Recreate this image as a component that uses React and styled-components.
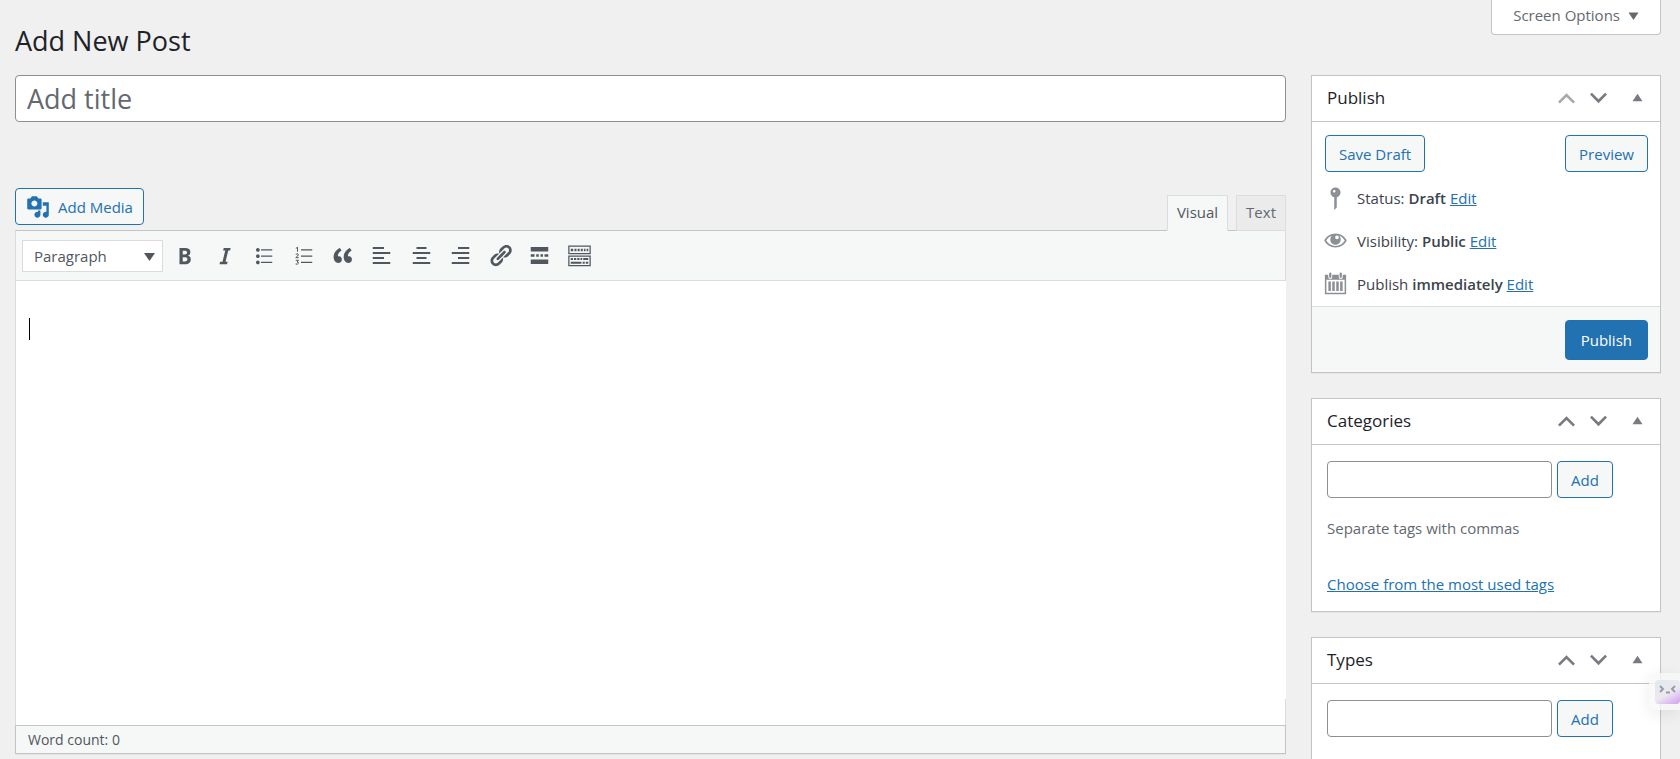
import React, { useState } from 'react';
import styled, { createGlobalStyle } from 'styled-components';


const GlobalStyle = createGlobalStyle`
    * {
        box-sizing: border-box;
    }

    body {
        margin: 0;
        background-color: #f0f0f0;
        color: #3c434a;
        font-family: "Open Sans", "Noto Sans", sans-serif;
        font-size: 15px;
        line-height: 22px;
    }

    button, input, select {
        font: inherit;
    }
`;

const Page = styled.div`
    height: 100vh;
    overflow: hidden;
    padding: 0 19px 0 15px;
`;

const TopBar = styled.header`
    display: flex;
    justify-content: space-between;
    align-items: flex-start;
    height: 75px;
`;

const PageHeading = styled.h1`
    margin: 0;
    padding-top: 22px;
    color: #1d2327;
    font-size: 27px;
    font-weight: 400;
    line-height: 38px;
`;

const ScreenOptions = styled.button`
    display: flex;
    align-items: center;
    gap: 1px;
    height: 35px;
    padding: 0 14px 4px 21px;
    border: 1px solid #c3c4c7;
    border-top: 0;
    border-radius: 0 0 4px 4px;
    background-color: #fff;
    color: #646970;
`;

const Columns = styled.div`
    display: flex;
    align-items: flex-start;
    gap: 25px;
`;

const Main = styled.main`
    flex: 1;
    min-width: 0;
`;

const Sidebar = styled.aside`
    width: 350px;
    display: flex;
    flex-direction: column;
    gap: 25px;
`;

const TitleInput = styled.input`
    display: block;
    width: 100%;
    height: 47px;
    padding: 0 11px;
    border: 1px solid #8c8f94;
    border-radius: 4px;
    background-color: #fff;
    font-size: 27px;

    &::placeholder {
        color: #646970;
        opacity: 1;
    }
`;

const EditorTools = styled.div`
    display: flex;
    justify-content: space-between;
    align-items: flex-end;
    margin-top: 66px;
`;

const Button = styled.button`
    display: flex;
    align-items: center;
    justify-content: center;
    height: 37px;
    padding: 0 13px;
    border: 1px solid #2271b1;
    border-radius: 4px;
    background-color: #f6f7f7;
    color: #2271b1;
    white-space: nowrap;
`;

const MediaButton = styled(Button)`
    gap: 8px;
    padding: 0 10px;
    margin-bottom: 5px;
`;

const PrimaryButton = styled(Button)`
    height: 40px;
    padding: 0 15px;
    background-color: #2271b1;
    color: #fff;
`;

const Tabs = styled.div`
    display: flex;
    gap: 8px;
`;

const Tab = styled.button`
    position: relative;
    height: 36px;
    margin-bottom: -1px;
    padding: 0 9px 2px;
    border: 1px solid #dcdcde;
    border-bottom-color: ${props => props.$active ? '#f6f7f7' : '#dcdcde'};
    background-color: ${props => props.$active ? '#f6f7f7' : '#ebebeb'};
    color: ${props => props.$active ? '#50575e' : '#646970'};
`;

const Toolbar = styled.div`
    display: flex;
    align-items: center;
    height: 51px;
    padding: 0 6px;
    border: 1px solid #dcdcde;
    border-top-color: #c3c4c7;
    background-color: #f6f7f7;
`;

const FormatWrap = styled.label`
    position: relative;
    width: 141px;
    margin-right: 2px;
`;

const FormatSelect = styled.select`
    display: block;
    appearance: none;
    width: 100%;
    height: 32px;
    padding: 0 11px;
    border: 1px solid #dcdcde;
    border-radius: 0;
    background-color: #fff;
    color: #50575e;
    font-size: 15px;
`;

const FormatArrow = styled.svg`
    position: absolute;
    right: 8px;
    top: 13px;
    width: 11px;
    height: 8px;
    fill: #50575e;
    pointer-events: none;
`;

const ToolGroup = styled.div`
    display: grid;
    grid-template-columns: repeat(11, 1fr);
    width: 434px;
`;

const IconButton = styled.button`
    display: flex;
    align-items: center;
    justify-content: center;
    min-width: 0;
    padding: 0;
    border: 0;
    background: none;
    color: ${props => props.$faded ? '#a7aaad' : props.$color || '#787c82'};
`;

const Svg = styled.svg`
    flex: none;
    display: block;
    width: ${props => props.$size}px;
    height: ${props => props.$size}px;
    fill: currentColor;
`;

const Canvas = styled.div`
    height: 418px;
    padding: 37px 13px;
    border-left: 1px solid #dcdcde;
    background-color: #fff;
`;

const Caret = styled.span`
    display: block;
    width: 1px;
    height: 22px;
    background-color: #000;
`;

const CanvasEnd = styled.div`
    height: 26px;
    border: 1px solid #dcdcde;
    border-width: 0 1px;
    background-color: #fff;
`;

const StatusBar = styled.footer`
    height: 29px;
    padding: 0 12px;
    border: 1px solid #c3c4c7;
    background-color: #f6f7f7;
    box-shadow: 0 1px 1px rgba(0, 0, 0, 0.04);
    color: #50575e;
    font-size: 14px;
    line-height: 27px;
`;

const Box = styled.section`
    border: 1px solid #c3c4c7;
    background-color: #fff;
    box-shadow: 0 1px 1px rgba(0, 0, 0, 0.04);
`;

const BoxHeader = styled.div`
    display: flex;
    align-items: center;
    height: 46px;
    padding: 0 0 2px 15px;
    border-bottom: 1px solid #c3c4c7;
`;

const BoxHeading = styled.h2`
    flex: 1;
    margin: 0;
    color: #1d2327;
    font-size: 17px;
    font-weight: 500;
`;

const BoxActions = styled.div`
    display: grid;
    grid-template-columns: 32px 33px 45px;
`;

const DraftActions = styled.div`
    display: flex;
    justify-content: space-between;
    padding: 13px 12px 4px 13px;
`;

const MiscRow = styled.div`
    display: flex;
    align-items: center;
    gap: 9px;
    height: 43px;
    padding: 0 11px;
    color: #3c434a;

    svg {
        color: #8c8f94;
    }

    strong {
        font-weight: 600;
    }
`;

const Link = styled.a`
    color: #2271b1;
    text-decoration: underline;
`;

const PublishFooter = styled.div`
    display: flex;
    justify-content: flex-end;
    margin-top: 1px;
    padding: 13px 12px 12px;
    border-top: 1px solid #dcdcde;
    background-color: #f6f7f7;
`;

const TagsBody = styled.div`
    min-height: 166px;
    padding: 16px 15px;
`;

const TagRow = styled.form`
    display: flex;
    gap: 5px;
`;

const TagInput = styled.input`
    width: 225px;
    height: 37px;
    padding: 0 10px;
    border: 1px solid #8c8f94;
    border-radius: 4px;
    background-color: #fff;
`;

const Hint = styled.p`
    margin: 19px 0 34px;
    color: #646970;
`;

const TagCloud = styled.p`
    margin: 0;
`;

const Assistant = styled.button`
    position: fixed;
    right: 0;
    top: 673px;
    display: flex;
    align-items: center;
    width: 31px;
    height: 37px;
    padding: 0 0 0 6px;
    border: 0;
    border-radius: 6px 0 0 6px;
    background-color: rgba(248, 248, 248, 0.8);
    box-shadow: 0 4px 16px rgba(0, 0, 0, 0.08);
`;

const AssistantFace = styled.svg`
    width: 25px;
    height: 24px;
    border-radius: 4px;
    background: linear-gradient(150deg, #e4eaec 20%, #ece8f2 55%, #cf9df0 100%);
`;

const icons = {
    bold: 'M6 4v13h4.54c1.37 0 2.46-.33 3.26-1 .8-.66 1.2-1.58 1.2-2.77 0-.84-.17-1.51-.51-2.01s-.9-.85-1.67-1.03v-.09c.57-.1 1.02-.4 1.36-.9s.51-1.13.51-1.91c0-1.14-.39-1.98-1.17-2.5C12.75 4.26 11.5 4 9.78 4H6zm2.57 5.15V6.26h1.36c.73 0 1.27.11 1.61.32.34.22.51.58.51 1.07 0 .54-.16.92-.47 1.15s-.82.35-1.51.35h-1.5zm0 2.19h1.6c1.44 0 2.16.53 2.16 1.61 0 .6-.17 1.05-.51 1.34s-.86.43-1.57.43H8.57v-3.38z',
    italic: 'M14.9 4h-5.500l-.5 2h1.700l-2.200 9H6.500L6 17h6l.5-2h-1.700L13 6h1.500z',
    bullets: 'M5.5 7C4.67 7 4 6.33 4 5.5 4 4.68 4.67 4 5.5 4 6.32 4 7 4.68 7 5.5 7 6.33 6.32 7 5.5 7zM8 5h9v1H8V5zm-2.5 7c-.83 0-1.5-.67-1.5-1.5C4 9.68 4.67 9 5.5 9c.82 0 1.5.68 1.5 1.5 0 .83-.68 1.5-1.5 1.5zM8 10h9v1H8v-1zm-2.5 7c-.83 0-1.5-.67-1.5-1.5 0-.82.67-1.5 1.5-1.5.82 0 1.5.68 1.5 1.5 0 .83-.68 1.5-1.5 1.5zM8 15h9v1H8v-1z',
    quote: 'M9.49 13.22c0-.74-.2-1.38-.61-1.9-.62-.78-1.83-.88-2.53-.72-.29-1.65 1.11-3.75 2.92-4.65L7.88 4c-2.73 1.3-5.42 4.28-4.96 8.05C3.21 14.43 4.59 16 6.54 16c.85 0 1.56-.25 2.12-.75s.83-1.18.83-2.03zm8.05 0c0-.74-.2-1.38-.61-1.9-.63-.78-1.83-.88-2.53-.72-.29-1.65 1.11-3.75 2.92-4.65L15.93 4c-2.73 1.3-5.41 4.28-4.95 8.05.29 2.38 1.66 3.95 3.61 3.95.85 0 1.56-.25 2.12-.75s.83-1.18.83-2.03z',
    alignLeft: 'M3 3.2h9v1.6H3zM3 7.2h14v1.6H3zM3 11.2h9v1.6H3zM3 15.2h14v1.6H3z',
    alignCenter: 'M6 3.2h8v1.6H6zM3 7.2h14v1.6H3zM6 11.2h8v1.6H6zM3 15.2h14v1.6H3z',
    alignRight: 'M8 3.2h9v1.6H8zM3 7.2h14v1.6H3zM8 11.2h9v1.6H8zM3 15.2h14v1.6H3z',
    link: 'M17.74 2.76c1.68 1.69 1.68 4.41 0 6.1l-1.53 1.52c-1.12 1.12-2.7 1.47-4.14 1.09l2.62-2.61.76-.77.76-.76c.84-.84.84-2.2 0-3.04-.84-.85-2.2-.85-3.04 0l-.77.76-3.38 3.38c-.37-1.44-.02-3.02 1.1-4.14l1.52-1.53c1.69-1.68 4.42-1.68 6.1 0zM8.59 13.43l5.34-5.34c.42-.42.42-1.1 0-1.52-.44-.43-1.13-.39-1.53 0l-5.33 5.34c-.42.42-.42 1.1 0 1.52.44.43 1.13.39 1.52 0zm-.76 2.29l4.14-4.15c.38 1.44.03 3.02-1.09 4.14l-1.52 1.53c-1.69 1.68-4.41 1.68-6.1 0-1.68-1.68-1.68-4.42 0-6.1l1.53-1.52c1.12-1.12 2.7-1.47 4.14-1.1l-4.14 4.15c-.85.84-.85 2.2 0 3.05.84.84 2.2.84 3.04 0z',
    more: 'M3 3.2h14v3.6H3zM3 9h3v2H3zM7.4 9h2v2h-2zM10.8 9h2v2h-2zM14 9h3v2h-3zM3 13.2h14v3.6H3z',
    keyboard: 'M1 2h18v7H1zM2 3v5h16V3zM3 4.5h2v2H3zM6 4.5h1.6v2H6zM8.5 4.5h1.6v2H8.5zM11 4.5h1.6v2H11zM13.5 4.5h1.3v2h-1.3zM15.7 4.5H17v2h-1.3zM1 10h18v8.5H1zM2 11v6.5h16V11zM3 12h1.8v1.5H3zM5.6 12h1.8v1.5H5.6zM8.2 12h1.8v1.5H8.2zM10.8 12h1.4v1.5h-1.4zM13 12h4v1.5h-4zM3 15h8.5v1.6H3zM12.5 15h1.7v1.6h-1.7zM15 15h2v1.6h-2z',
    media: 'M13 11V4c0-.55-.45-1-1-1h-1.67L9 1H5L3.67 3H2c-.55 0-1 .45-1 1v7c0 .55.45 1 1 1h10c.55 0 1-.45 1-1zM7 4.5c1.38 0 2.5 1.12 2.5 2.5S8.38 9.5 7 9.5 4.5 8.38 4.5 7 5.62 4.5 7 4.5zM14 6h5v10.5c0 1.38-1.12 2.5-2.5 2.5S14 17.88 14 16.5s1.12-2.5 2.5-2.5c.17 0 .34.02.5.05V9h-3V6zm-4 8.05V13h2v3.5c0 1.38-1.12 2.5-2.5 2.5S7 17.88 7 16.5 8.12 14 9.5 14c.17 0 .34.02.5.05z',
    pin: 'M14 6c0 1.86-1.28 3.41-3 3.86V18l-2 2V9.86c-1.72-.45-3-2-3-3.86 0-2.21 1.79-4 4-4s4 1.79 4 4zM8 5c0 .55.45 1 1 1s1-.45 1-1-.45-1-1-1-1 .45-1 1z',
    eye: 'M10 4.4C5.8 4.4 2.6 6.7 1 10c1.600 3.300 4.800 5.600 9 5.600s7.400-2.300 9-5.600c-1.600-3.300-4.800-5.600-9-5.600zM10 14.300c-3.200 0-5.900-1.600-7.400-4.300 1-1.900 2.700-3.300 4.300-3.900-.7.9-1.100 1.900-1.100 3 0 2.300 1.900 4.200 4.200 4.200s4.200-1.900 4.200-4.200c0-1.100-.4-2.100-1.100-3 1.600.6 3.300 2 4.300 3.900-1.500 2.700-4.200 4.300-7.400 4.300zM11.200 5.900a1.500 1.500 0 1 1 0 3 1.500 1.500 0 0 1 0-3z',
    calendar: 'M1.500 3h2.700v1.700a1.600 1.600 0 0 0 3.200 0V3h5.200v1.700a1.600 1.600 0 0 0 3.200 0V3h2.700v15.500h-17zM2.700 7v10.300h14.600V7zM4.300 8.300h2V16h-2zM7.400 8.300h2V16h-2zM10.600 8.300h2V16h-2zM13.700 8.300h2V16h-2zM4.900 2a.9.9 0 0 1 1.800 0v2.600a.9.9 0 0 1-1.800 0zM13.300 2a.9.9 0 0 1 1.800 0v2.600a.9.9 0 0 1-1.800 0z',
    up: 'M3.200 13.400L10 6.500l6.800 6.900-1.500 1.400L10 9.600l-5.300 5.200z',
    down: 'M3.200 7.600L10 14.500l6.800-6.900-1.500-1.400L10 11.400 4.700 6.200z',
    toggle: 'M6 13l4-6 4 6z',
    arrowDown: 'M6 7.500h8l-4 6z'
};

const tools = [
    ['bold', 'Bold'],
    ['italic', 'Italic'],
    ['bullets', 'Bulleted list'],
    ['numbers', 'Numbered list'],
    ['quote', 'Blockquote'],
    ['alignLeft', 'Align left'],
    ['alignCenter', 'Align center'],
    ['alignRight', 'Align right'],
    ['link', 'Insert link'],
    ['more', 'Insert Read More tag'],
    ['keyboard', 'Toolbar Toggle']
];

function Icon({ name, size = 25 }) {
    return (
        <Svg $size={size} viewBox="0 0 20 20" fillRule="evenodd" aria-hidden="true">
            {
                name === 'numbers'
                    ? <>
                        <path d="M8 5h9v1H8zM8 10h9v1H8zM8 15h9v1H8z"/>
                        <path
                            d="M3.9 4.3L5.2 3.4V7M3.8 9q2.2-1 2.1.4-.1.8-2.1 2.300h2.400M3.800 13.800h2.200l-1.200 1.400q1.400 0 1.200 1-.4 1.100-2.300.6"
                            fill="none"
                            stroke="currentColor"
                            strokeWidth=".8"
                        />
                    </>
                    : <path d={icons[name]}/>
            }
        </Svg>
    );
}

function MetaBox({ title, first, children }) {
    const [open, setOpen] = useState(true);

    return (
        <Box>
            <BoxHeader>
                <BoxHeading>{title}</BoxHeading>
                <BoxActions>
                    <IconButton $faded={first} aria-label={`Move ${title} up`}><Icon name="up"/></IconButton>
                    <IconButton aria-label={`Move ${title} down`}><Icon name="down"/></IconButton>
                    <IconButton aria-label={`Toggle ${title}`} aria-expanded={open} onClick={() => setOpen(!open)}>
                        <Icon name="toggle"/>
                    </IconButton>
                </BoxActions>
            </BoxHeader>
            {open && children}
        </Box>
    );
}

function TagsPanel({ label, children }) {
    return (
        <TagsBody>
            <TagRow onSubmit={e => e.preventDefault()}>
                <TagInput type="text" aria-label={label}/>
                <Button type="submit">Add</Button>
            </TagRow>
            {children}
        </TagsBody>
    );
}

function Editor() {
    const [mode, setMode] = useState('Visual');

    return (
        <>
            <EditorTools>
                <MediaButton><Icon name="media" size={24}/>Add Media</MediaButton>
                <Tabs>
                    {['Visual', 'Text'].map(name => (
                        <Tab key={name} $active={mode === name} onClick={() => setMode(name)}>{name}</Tab>
                    ))}
                </Tabs>
            </EditorTools>
            <Toolbar>
                <FormatWrap>
                    <FormatSelect aria-label="Format" defaultValue="Paragraph">
                        <option>Paragraph</option>
                        <option>Heading 1</option>
                        <option>Heading 2</option>
                    </FormatSelect>
                    <FormatArrow viewBox="0 0 11 8"><path d="M0 0h11L5.5 8z"/></FormatArrow>
                </FormatWrap>
                <ToolGroup>
                    {tools.map(([name, label]) => (
                        <IconButton key={name} $color="#50575e" aria-label={label}><Icon name={name}/></IconButton>
                    ))}
                </ToolGroup>
            </Toolbar>
            <Canvas role="textbox" aria-label="Post content" aria-multiline="true">
                <Caret/>
            </Canvas>
            <CanvasEnd/>
            <StatusBar>Word count: 0</StatusBar>
        </>
    );
}

export default function App() {
    return (
        <Page>
            <GlobalStyle/>
            <TopBar>
                <PageHeading>Add New Post</PageHeading>
                <ScreenOptions>Screen Options<Icon name="arrowDown"/></ScreenOptions>
            </TopBar>
            <Columns>
                <Main>
                    <TitleInput type="text" placeholder="Add title" aria-label="Add title"/>
                    <Editor/>
                </Main>
                <Sidebar>
                    <MetaBox title="Publish" first>
                        <DraftActions>
                            <Button>Save Draft</Button>
                            <Button>Preview</Button>
                        </DraftActions>
                        <MiscRow>
                            <Icon name="pin"/>
                            <span>Status: <strong>Draft</strong> <Link href="#status">Edit</Link></span>
                        </MiscRow>
                        <MiscRow>
                            <Icon name="eye"/>
                            <span>Visibility: <strong>Public</strong> <Link href="#visibility">Edit</Link></span>
                        </MiscRow>
                        <MiscRow>
                            <Icon name="calendar"/>
                            <span>Publish <strong>immediately</strong> <Link href="#schedule">Edit</Link></span>
                        </MiscRow>
                        <PublishFooter>
                            <PrimaryButton>Publish</PrimaryButton>
                        </PublishFooter>
                    </MetaBox>
                    <MetaBox title="Categories">
                        <TagsPanel label="Categories">
                            <Hint>Separate tags with commas</Hint>
                            <TagCloud><Link href="#tags">Choose from the most used tags</Link></TagCloud>
                        </TagsPanel>
                    </MetaBox>
                    <MetaBox title="Types">
                        <TagsPanel label="Types"/>
                    </MetaBox>
                </Sidebar>
            </Columns>
            <Assistant aria-label="Assistant">
                <AssistantFace viewBox="0 0 25 24" fill="none" stroke="#9a9ca6" strokeWidth="2">
                    <path d="M5 6l3 3-3 3M11 12.5h4M20 6l-3 3 3 3"/>
                </AssistantFace>
            </Assistant>
        </Page>
    );
}
